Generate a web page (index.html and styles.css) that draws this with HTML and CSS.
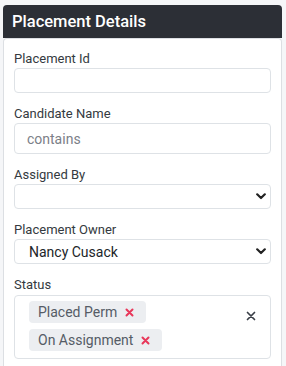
FILE: index.html
```html
<!DOCTYPE html>
<html>
<head>
<meta charset="utf-8">
<link rel="stylesheet" href="styles.css">
</head>
<body>
<div class="panel">
  <div class="panel-header">Placement Details</div>
  <div class="panel-body">
    <div class="field">
      <div class="label">Placement Id</div>
      <div class="input small"></div>
    </div>
    <div class="field">
      <div class="label">Candidate Name</div>
      <div class="input tall"><span class="placeholder">contains</span></div>
    </div>
    <div class="field">
      <div class="label">Assigned By</div>
      <div class="input select">
        <span class="value"></span>
        <svg class="chev" width="10" height="7" viewBox="0 0 10 7"><path d="M1.2 1.3 L5 5 L8.8 1.3" fill="none" stroke="#222" stroke-width="2.2" stroke-linecap="round" stroke-linejoin="round"/></svg>
      </div>
    </div>
    <div class="field">
      <div class="label">Placement Owner</div>
      <div class="input select">
        <span class="value">Nancy Cusack</span>
        <svg class="chev" width="10" height="7" viewBox="0 0 10 7"><path d="M1.2 1.3 L5 5 L8.8 1.3" fill="none" stroke="#222" stroke-width="2.2" stroke-linecap="round" stroke-linejoin="round"/></svg>
      </div>
    </div>
    <div class="field last">
      <div class="label">Status</div>
      <div class="multi">
        <div class="tags">
          <span class="tag">Placed Perm<svg class="tag-x" width="9" height="9" viewBox="0 0 9 9"><path d="M1.5 1.5 L7.5 7.5 M7.5 1.5 L1.5 7.5" stroke="#e8375a" stroke-width="2" stroke-linecap="round"/></svg></span>
          <span class="tag">On Assignment<svg class="tag-x" width="9" height="9" viewBox="0 0 9 9"><path d="M1.5 1.5 L7.5 7.5 M7.5 1.5 L1.5 7.5" stroke="#e8375a" stroke-width="2" stroke-linecap="round"/></svg></span>
        </div>
        <svg class="clear" width="10" height="10" viewBox="0 0 10 10"><path d="M1.5 1.5 L8.5 8.5 M8.5 1.5 L1.5 8.5" stroke="#3a3f47" stroke-width="1.7" stroke-linecap="round"/></svg>
      </div>
    </div>
  </div>
</div>
</body>
</html>
```
FILE: styles.css
```css
html, body {
  margin: 0;
  padding: 0;
  background: #f5f6f8;
  font-family: Roboto, "Noto Sans", sans-serif;
  overflow: hidden;
}
.panel {
  margin: 5px 4px 0 3px;
}
.panel-header {
  background: #2c2f36;
  color: #ffffff;
  height: 33px;
  line-height: 33px;
  padding-left: 9px;
  font-size: 16.5px;
  font-weight: 500;
  border-radius: 4px 4px 0 0;
}
.panel-body {
  box-sizing: border-box;
  background: #ffffff;
  border: 1px solid #dcdfe3;
  border-bottom: none;
  border-radius: 4px 4px 0 0;
  padding: 12px 10px 0 10px;
  height: 328px;
}
.field {
  margin-bottom: 13px;
}
.field.last {
  margin-bottom: 0;
}
.label {
  font-size: 13px;
  line-height: 16px;
  color: #343a40;
  margin-bottom: 1px;
}
.input {
  box-sizing: border-box;
  border: 1px solid #dee2e6;
  border-radius: 4px;
  height: 25px;
  display: flex;
  align-items: center;
  font-size: 14px;
  color: #212529;
}
.input.tall {
  height: 31px;
  padding-left: 12px;
}
.placeholder {
  color: #7b8088;
}
.input.select {
  height: 25px;
  padding-left: 14px;
  padding-right: 4px;
  justify-content: space-between;
}
.multi {
  box-sizing: border-box;
  border: 1px solid #dee2e6;
  border-radius: 4px;
  height: 64px;
  margin-top: 2px;
  display: flex;
  justify-content: space-between;
  padding: 5px 14px 0 14px;
}
.tags {
  display: flex;
  flex-direction: column;
  align-items: flex-start;
  gap: 6px;
}
.tag {
  display: inline-flex;
  align-items: center;
  background: #eceef1;
  border-radius: 4px;
  height: 22px;
  padding: 0 12px 0 9px;
  font-size: 14px;
  color: #555c66;
}
.tag-x {
  margin-left: 8px;
}
.clear {
  margin-top: 10px;
}
```
